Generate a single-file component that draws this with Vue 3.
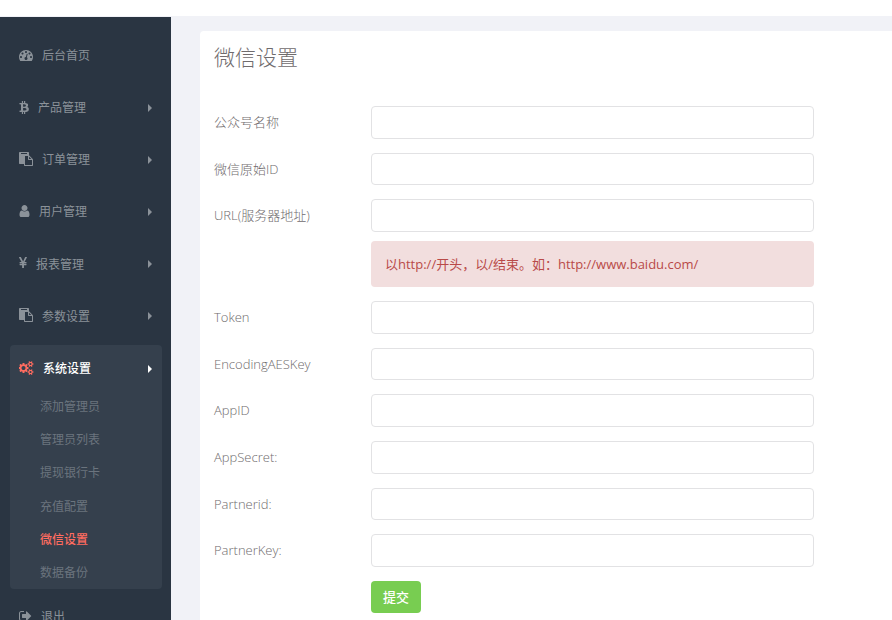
<script setup>
const icons = {
  dashboard: {
    box: '0 0 1792 1792', w: 14,
    d: 'M384 1152q0-53-37.5-90.5t-90.5-37.5-90.5 37.5-37.5 90.5 37.5 90.5 90.5 37.5 90.5-37.5 37.5-90.5zm192-448q0-53-37.5-90.5t-90.5-37.5-90.5 37.5-37.5 90.5 37.5 90.5 90.5 37.5 90.5-37.5 37.5-90.5zm428 481l101-382q6-26-7.5-48.5t-38.5-29.5-48 6.5-30 39.5l-101 382q-60 5-107 43.5t-63 98.5q-20 77 20 146t117 89 146-20 89-117q16-60-6-117t-72-91zm660-33q0-53-37.5-90.5t-90.5-37.5-90.5 37.5-37.5 90.5 37.5 90.5 90.5 37.5 90.5-37.5 37.5-90.5zm-640-640q0-53-37.5-90.5t-90.5-37.5-90.5 37.5-37.5 90.5 37.5 90.5 90.5 37.5 90.5-37.5 37.5-90.5zm448 192q0-53-37.5-90.5t-90.5-37.5-90.5 37.5-37.5 90.5 37.5 90.5 90.5 37.5 90.5-37.5 37.5-90.5zm320 448q0 261-141 483-19 29-54 29h-1402q-35 0-54-29-141-221-141-483 0-182 71-348t191-286 286-191 348-71 348 71 286 191 191 286 71 348z',
  },
  bitcoin: {
    box: '0 0 1280 1792', w: 10,
    d: 'M1167 640q18 182-131 258 117 28 175 103t45 214q-7 71-32.5 125t-64.5 89-97 58.5-121.5 34.5-145.5 15v255h-154v-251q-80 0-122-1v252h-154v-255q-18 0-54-.5t-55-.5h-200l31-183h111q50 0 58-51v-402h16q-6-1-16-1v-287q-13-68-89-68h-111v-164l212 1q64 0 97-1v-252h154v247q82-2 122-2v-245h154v252q79 7 140 22.5t113 45 82.5 78 36.5 114.5zm-215 545q0-36-15-64t-37-46-57.5-30.5-65.5-18.5-74-9-69-3-64.5 1-47.5 1v338q8 0 37 .5t48 .5 53-1.5 58.5-4 57-8.5 55.5-14 47.5-21 39.5-30 24.5-40 9.5-51zm-71-476q0-33-12.5-58.5t-30.5-42-48-28-55-16.5-61.5-8-58-2.5-54 1-39.5.5v307q5 0 34.5.5t46.5 0 50-2 55-5.5 51.5-11 48.5-18.5 37-27 27-38.5 9-51z',
  },
  paste: {
    box: '0 0 1792 1792', w: 14,
    d: 'M768 1664h896v-640h-416q-40 0-68-28t-28-68v-416h-384v1152zm256-1440v-64q0-13-9.5-22.5t-22.5-9.5h-704q-13 0-22.5 9.5t-9.5 22.5v64q0 13 9.5 22.5t22.5 9.5h704q13 0 22.5-9.5t9.5-22.5zm256 672h299l-299-299v299zm512 128v672q0 40-28 68t-68 28h-960q-40 0-68-28t-28-68v-160h-544q-40 0-68-28t-28-68v-1344q0-40 28-68t68-28h1088q40 0 68 28t28 68v328q21 13 36 28l408 408q28 28 48 76t20 88z',
  },
  user: {
    box: '256 0 1280 1792', w: 11,
    d: 'M1536 1399q0 109-62.5 187t-150.5 78h-854q-88 0-150.5-78t-62.5-187q0-85 8.5-160.5t31.5-152 58.5-131 94-89 134.5-34.5q131 128 313 128t313-128q76 0 134.5 34.5t94 89 58.5 131 31.5 152 8.5 160.5zm-256-887q0 159-112.5 271.5t-271.5 112.5-271.5-112.5-112.5-271.5 112.5-271.5 271.5-112.5 271.5 112.5 112.5 271.5z',
  },
  yen: {
    box: '384 0 1024 1792', w: 8,
    d: 'M985.5 1536h-172q-13 0-22.5-9t-9.5-23v-330h-288q-13 0-22.5-9t-9.5-23v-103q0-13 9.5-22.5t22.5-9.5h288v-85h-288q-13 0-22.5-9t-9.5-23v-104q0-13 9.5-22.5t22.5-9.5h214l-321-578q-8-16 0-32 10-16 28-16h194q19 0 29 18l215 425q19 38 56 125 10-24 30.5-68t27.5-61l191-420q8-19 29-19h191q17 0 27 16 9 14 1 31l-313 579h215q13 0 22.5 9.5t9.5 22.5v104q0 14-9.5 23t-22.5 9h-290v85h290q13 0 22.5 9.5t9.5 22.5v103q0 14-9.5 23t-22.5 9h-290v330q0 13-9.5 22.5t-22.5 9.5z',
  },
  cogs: {
    box: '0 0 1920 1792', w: 15,
    d: 'M832 896q0-106-75-181t-181-75-181 75-75 181 75 181 181 75 181-75 75-181zm768 512q0-52-38-90t-90-38-90 38-38 90q0 53 37.5 90.5t90.5 37.5 90.5-37.5 37.5-90.5zm0-1024q0-52-38-90t-90-38-90 38-38 90q0 53 37.5 90.5t90.5 37.5 90.5-37.5 37.5-90.5zm-384 421v185q0 10-7 19.5t-16 10.5l-155 24q-11 35-32 76 34 48 90 115 7 11 7 20 0 12-7 19-23 30-82.5 89.5t-78.5 59.5q-11 0-21-7l-115-90q-37 19-77 31-11 108-23 155-7 24-30 24h-186q-11 0-20-7.5t-10-17.5l-23-153q-34-10-75-31l-118 89q-7 7-20 7-11 0-21-8-144-133-144-160 0-9 7-19 10-14 41-53t47-61q-23-44-35-82l-152-24q-10-1-17-9.5t-7-19.5v-185q0-10 7-19.5t16-10.5l155-24q11-35 32-76-34-48-90-115-7-11-7-20 0-12 7-20 22-30 82-89t79-59q11 0 21 7l115 90q34-18 77-32 11-108 23-154 7-24 30-24h186q11 0 20 7.5t10 17.5l23 153q34 10 75 31l118-89q8-7 20-7 11 0 21 8 144 133 144 160 0 8-7 19-12 16-42 54t-45 60q23 48 34 82l152 23q10 2 17 10.5t7 19.5zm640 533v140q0 16-149 31-12 27-30 52 51 113 51 138 0 4-4 7-122 71-124 71-8 0-46-47t-52-68q-20 2-30 2t-30-2q-14 21-52 68t-46 47q-2 0-124-71-4-3-4-7 0-25 51-138-18-25-30-52-149-15-149-31v-140q0-16 149-31 13-29 30-52-51-113-51-138 0-4 4-7 4-2 35-20t59-34 30-16q8 0 46 46.5t52 67.5q20-2 30-2t30 2q51-71 92-112l6-2q4 0 124 70 4 3 4 7 0 25-51 138 17 23 30 52 149 15 149 31zm0-1024v140q0 16-149 31-12 27-30 52 51 113 51 138 0 4-4 7-122 71-124 71-8 0-46-47t-52-68q-20 2-30 2t-30-2q-14 21-52 68t-46 47q-2 0-124-71-4-3-4-7 0-25 51-138-18-25-30-52-149-15-149-31v-140q0-16 149-31 13-29 30-52-51-113-51-138 0-4 4-7 4-2 35-20t59-34 30-16q8 0 46 46.5t52 67.5q20-2 30-2t30 2q51-71 92-112l6-2q4 0 124 70 4 3 4 7 0 25-51 138 17 23 30 52 149 15 149 31z',
  },
  signOut: {
    box: '64 0 1664 1792', w: 13,
    d: 'M704 1440q0 4 1 20t.5 26.5-3 23.5-10 19.5-20.5 6.5h-320q-119 0-203.5-84.5t-84.5-203.5v-704q0-119 84.5-203.5t203.5-84.5h320q13 0 22.5 9.5t9.5 22.5q0 4 1 20t.5 26.5-3 23.5-10 19.5-20.5 6.5h-320q-66 0-113 47t-47 113v704q0 66 47 113t113 47h312l11.5 1 11.5 3 8 5.5 7 9 2 13.5zm928-544q0 26-19 45l-544 544q-19 19-45 19t-45-19-19-45v-288h-448q-26 0-45-19t-19-45v-384q0-26 19-45t45-19h448v-288q0-26 19-45t45-19 45 19l544 544q19 19 19 45z',
  },
}

const menu = [
  { text: '后台首页', icon: 'dashboard' },
  { text: '产品管理', icon: 'bitcoin', more: true },
  { text: '订单管理', icon: 'paste', more: true },
  { text: '用户管理', icon: 'user', more: true },
  { text: '报表管理', icon: 'yen', more: true },
  { text: '参数设置', icon: 'paste', more: true },
  {
    text: '系统设置', icon: 'cogs', more: true, open: true,
    children: ['添加管理员', '管理员列表', '提现银行卡', '充值配置', '微信设置', '数据备份'],
  },
  { text: '退出', icon: 'signOut' },
]
const current = '微信设置'

const fields = [
  { id: 'name', label: '公众号名称' },
  { id: 'origin-id', label: '微信原始ID' },
  { id: 'url', label: 'URL(服务器地址)', hint: '以http://开头，以/结束。如：http://www.baidu.com/' },
  { id: 'token', label: 'Token' },
  { id: 'aes-key', label: 'EncodingAESKey' },
  { id: 'app-id', label: 'AppID' },
  { id: 'app-secret', label: 'AppSecret:' },
  { id: 'partner-id', label: 'Partnerid:' },
  { id: 'partner-key', label: 'PartnerKey:' },
]
</script>

<template>
  <div class="page">
    <header class="topbar"></header>
    <div class="body">
      <nav class="sidebar">
        <ul class="menu">
          <li v-for="item in menu" :key="item.text" :class="{ open: item.open }">
            <a href="#" class="item">
              <svg class="icon" :viewBox="icons[item.icon].box" :width="icons[item.icon].w" height="14" aria-hidden="true">
                <path :d="icons[item.icon].d" />
              </svg>
              <span>{{ item.text }}</span>
              <svg v-if="item.more" class="caret" viewBox="0 0 4 8" width="4" height="8" aria-hidden="true">
                <path d="M0 0l4 4-4 4z" />
              </svg>
            </a>
            <ul v-if="item.children" class="sub">
              <li v-for="child in item.children" :key="child">
                <a href="#" :class="{ current: child === current }">{{ child }}</a>
              </li>
            </ul>
          </li>
        </ul>
      </nav>
      <main class="main">
        <section class="card">
          <h1>微信设置</h1>
          <form @submit.prevent>
            <div v-for="f in fields" :key="f.id" class="row">
              <label :for="f.id">{{ f.label }}</label>
              <div class="control">
                <input :id="f.id" type="text" />
                <p v-if="f.hint" class="alert">{{ f.hint }}</p>
              </div>
            </div>
            <div class="row">
              <button type="submit">提交</button>
            </div>
          </form>
        </section>
      </main>
    </div>
  </div>
</template>

<style>
body {
  margin: 0;
  background: #f1f2f7;
}
</style>

<style scoped>
.page {
  height: 100vh;
  overflow: hidden;
  display: flex;
  flex-direction: column;
  font-family: "Open Sans", "Noto Sans CJK SC", sans-serif;
  font-size: 13px;
  line-height: 1.43;
  color: #6f6b6d;
}
.topbar {
  flex: none;
  height: 16px;
  background: #fff;
  border-bottom: 1px solid #f1f2f7;
}
.body {
  flex: 1;
  min-height: 0;
  display: flex;
}
.sidebar {
  flex: none;
  width: 171px;
  box-sizing: border-box;
  padding: 12px 9px 0 10px;
  background: #2a3542;
  font-size: 12px;
  overflow: hidden;
}
ul {
  list-style: none;
  margin: 0;
  padding: 0;
}
a {
  text-decoration: none;
}
.item {
  display: flex;
  align-items: center;
  gap: 9px;
  padding: 18px 10px 17px 9px;
  color: #8b9299;
  fill: currentColor;
}
.icon {
  flex: none;
  margin-bottom: 2px;
}
.caret {
  margin-left: auto;
}
.open {
  margin-top: 3px;
  background: #35404d;
  border-radius: 4px;
}
.open > .item {
  color: #fff;
  font-weight: 500;
  padding: 15px 10px 13px 9px;
}
.open > .item .icon {
  fill: #ff6c60;
}
.open + li {
  margin-top: 1px;
}
.sub a {
  display: block;
  padding: 8px 10px 8px 30px;
  color: #6b747e;
}
.sub a.current {
  color: #ff6c60;
  font-weight: 500;
}
.main {
  flex: 1;
  min-width: 0;
  padding: 14px 0 0 29px;
}
.card {
  min-height: 100%;
  box-sizing: border-box;
  padding: 11px 78px 14px 14px;
  background: #fff;
  border-radius: 4px 0 0 0;
}
h1 {
  margin: 0 0 34px;
  font-size: 21px;
  font-weight: 300;
  line-height: 30px;
}
form {
  display: grid;
  gap: 14px;
}
.row {
  display: grid;
  grid-template-columns: 157px minmax(0, 1fr);
}
label {
  padding-top: 7px;
  font-weight: 300;
}
input {
  display: block;
  width: 100%;
  box-sizing: border-box;
  padding: 6px 12px;
  border: 1px solid #e2e2e4;
  border-radius: 4px;
  background: #fff;
  font: inherit;
  line-height: 1.43;
  color: inherit;
}
.alert {
  margin: 9px 0 0;
  padding: 14px;
  border-radius: 4px;
  background: #f2dede;
  color: #b94a48;
}
button {
  grid-column: 2;
  justify-self: start;
  padding: 7px 12px;
  border: 0;
  border-radius: 4px;
  background: #78cd51;
  color: #fff;
  font: inherit;
  font-weight: 500;
  line-height: 1.43;
}
</style>
